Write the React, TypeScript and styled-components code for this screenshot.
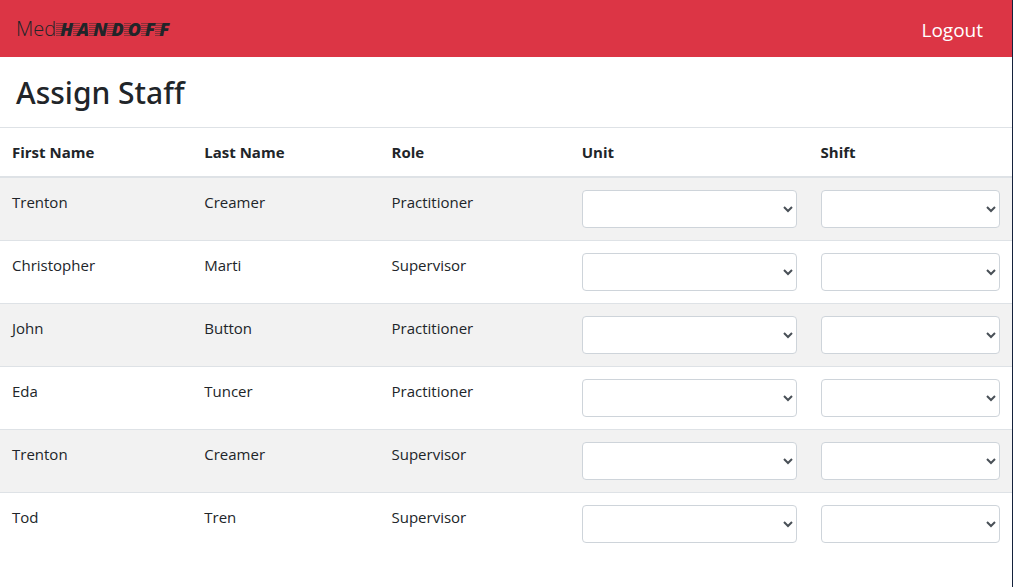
import React from "react";
import styled, { createGlobalStyle } from "styled-components";

const GlobalStyle = createGlobalStyle`
  *, *::before, *::after { box-sizing: border-box; }
  body {
    margin: 0;
    background: #fff;
    color: #212529;
    font-family: "Open Sans", "Noto Sans", sans-serif;
    font-size: 15px;
    line-height: 24px;
  }
`;

const Page = styled.div`
  min-height: 100vh;
  border-right: 1px solid #14223c;
`;

const Navbar = styled.nav`
  display: flex;
  align-items: center;
  justify-content: space-between;
  padding: 8px 16px;
  min-height: 57px;
  background: #dc3545;
`;

const Brand = styled.a`
  display: flex;
  align-items: center;
  color: #212529;
  font-size: 20px;
  line-height: 30px;
  font-weight: 300;
  text-decoration: none;
`;

const Wordmark = styled.span`
  display: flex;
  font-size: 18px;
  font-weight: 800;
  font-style: italic;
  line-height: 14px;
`;

const SpeedLetter = styled.span`
  padding-left: 4px;
  background: repeating-linear-gradient(
      to bottom,
      transparent 0 1px,
      rgba(33, 37, 41, 0.45) 1px 2px
    )
    left top / 7px 100% no-repeat;
`;

const LogoutLink = styled.a`
  padding: 5px 13px 3px;
  color: #fff;
  font-size: 19px;
  line-height: 32px;
  text-decoration: none;
`;

const Title = styled.h1`
  margin: 0;
  padding: 17px 16px 15px;
  font-family: "Noto Sans", "Open Sans", sans-serif;
  font-size: 30px;
  font-weight: 500;
  line-height: 38px;
`;

const StaffTable = styled.table`
  width: 100%;
  table-layout: fixed;
  border-collapse: separate;
  border-spacing: 0;
`;

const HeadCell = styled.th<{ $width: string }>`
  width: ${(p) => p.$width};
  padding: 12px;
  border-top: 1px solid #dee2e6;
  border-bottom: 2px solid #dee2e6;
  text-align: left;
  font-weight: 700;
`;

const Row = styled.tr`
  &:nth-child(odd) {
    background: #f2f2f2;
  }
  & + & > td {
    border-top: 1px solid #dee2e6;
  }
`;

const Cell = styled.td`
  padding: 12px;
  vertical-align: top;
`;

const Select = styled.select`
  display: block;
  width: 100%;
  height: 38px;
  padding: 6px 12px;
  border: 1px solid #ced4da;
  border-radius: 4px;
  background-color: #fff;
  color: #495057;
  font: inherit;
`;

const columns = [
  { label: "First Name", width: "19%" },
  { label: "Last Name", width: "18.5%" },
  { label: "Role", width: "18.8%" },
  { label: "Unit", width: "23.6%" },
  { label: "Shift", width: "20.1%" },
];

const staff = [
  { first: "Trenton", last: "Creamer", role: "Practitioner" },
  { first: "Christopher", last: "Marti", role: "Supervisor" },
  { first: "John", last: "Button", role: "Practitioner" },
  { first: "Eda", last: "Tuncer", role: "Practitioner" },
  { first: "Trenton", last: "Creamer", role: "Supervisor" },
  { first: "Tod", last: "Tren", role: "Supervisor" },
];

export default function App() {
  return (
    <Page>
      <GlobalStyle />
      <Navbar>
        <Brand href="#">
          Med
          <Wordmark>
            {"HANDOFF".split("").map((letter, i) => (
              <SpeedLetter key={i}>{letter}</SpeedLetter>
            ))}
          </Wordmark>
        </Brand>
        <LogoutLink href="#logout">Logout</LogoutLink>
      </Navbar>
      <main>
        <Title>Assign Staff</Title>
        <StaffTable>
          <thead>
            <tr>
              {columns.map((c) => (
                <HeadCell key={c.label} scope="col" $width={c.width}>
                  {c.label}
                </HeadCell>
              ))}
            </tr>
          </thead>
          <tbody>
            {staff.map((s, i) => (
              <Row key={i}>
                <Cell>{s.first}</Cell>
                <Cell>{s.last}</Cell>
                <Cell>{s.role}</Cell>
                <Cell>
                  <Select aria-label={`Unit for ${s.first} ${s.last}`}>
                    <option value="" />
                  </Select>
                </Cell>
                <Cell>
                  <Select aria-label={`Shift for ${s.first} ${s.last}`}>
                    <option value="" />
                  </Select>
                </Cell>
              </Row>
            ))}
          </tbody>
        </StaffTable>
      </main>
    </Page>
  );
}
